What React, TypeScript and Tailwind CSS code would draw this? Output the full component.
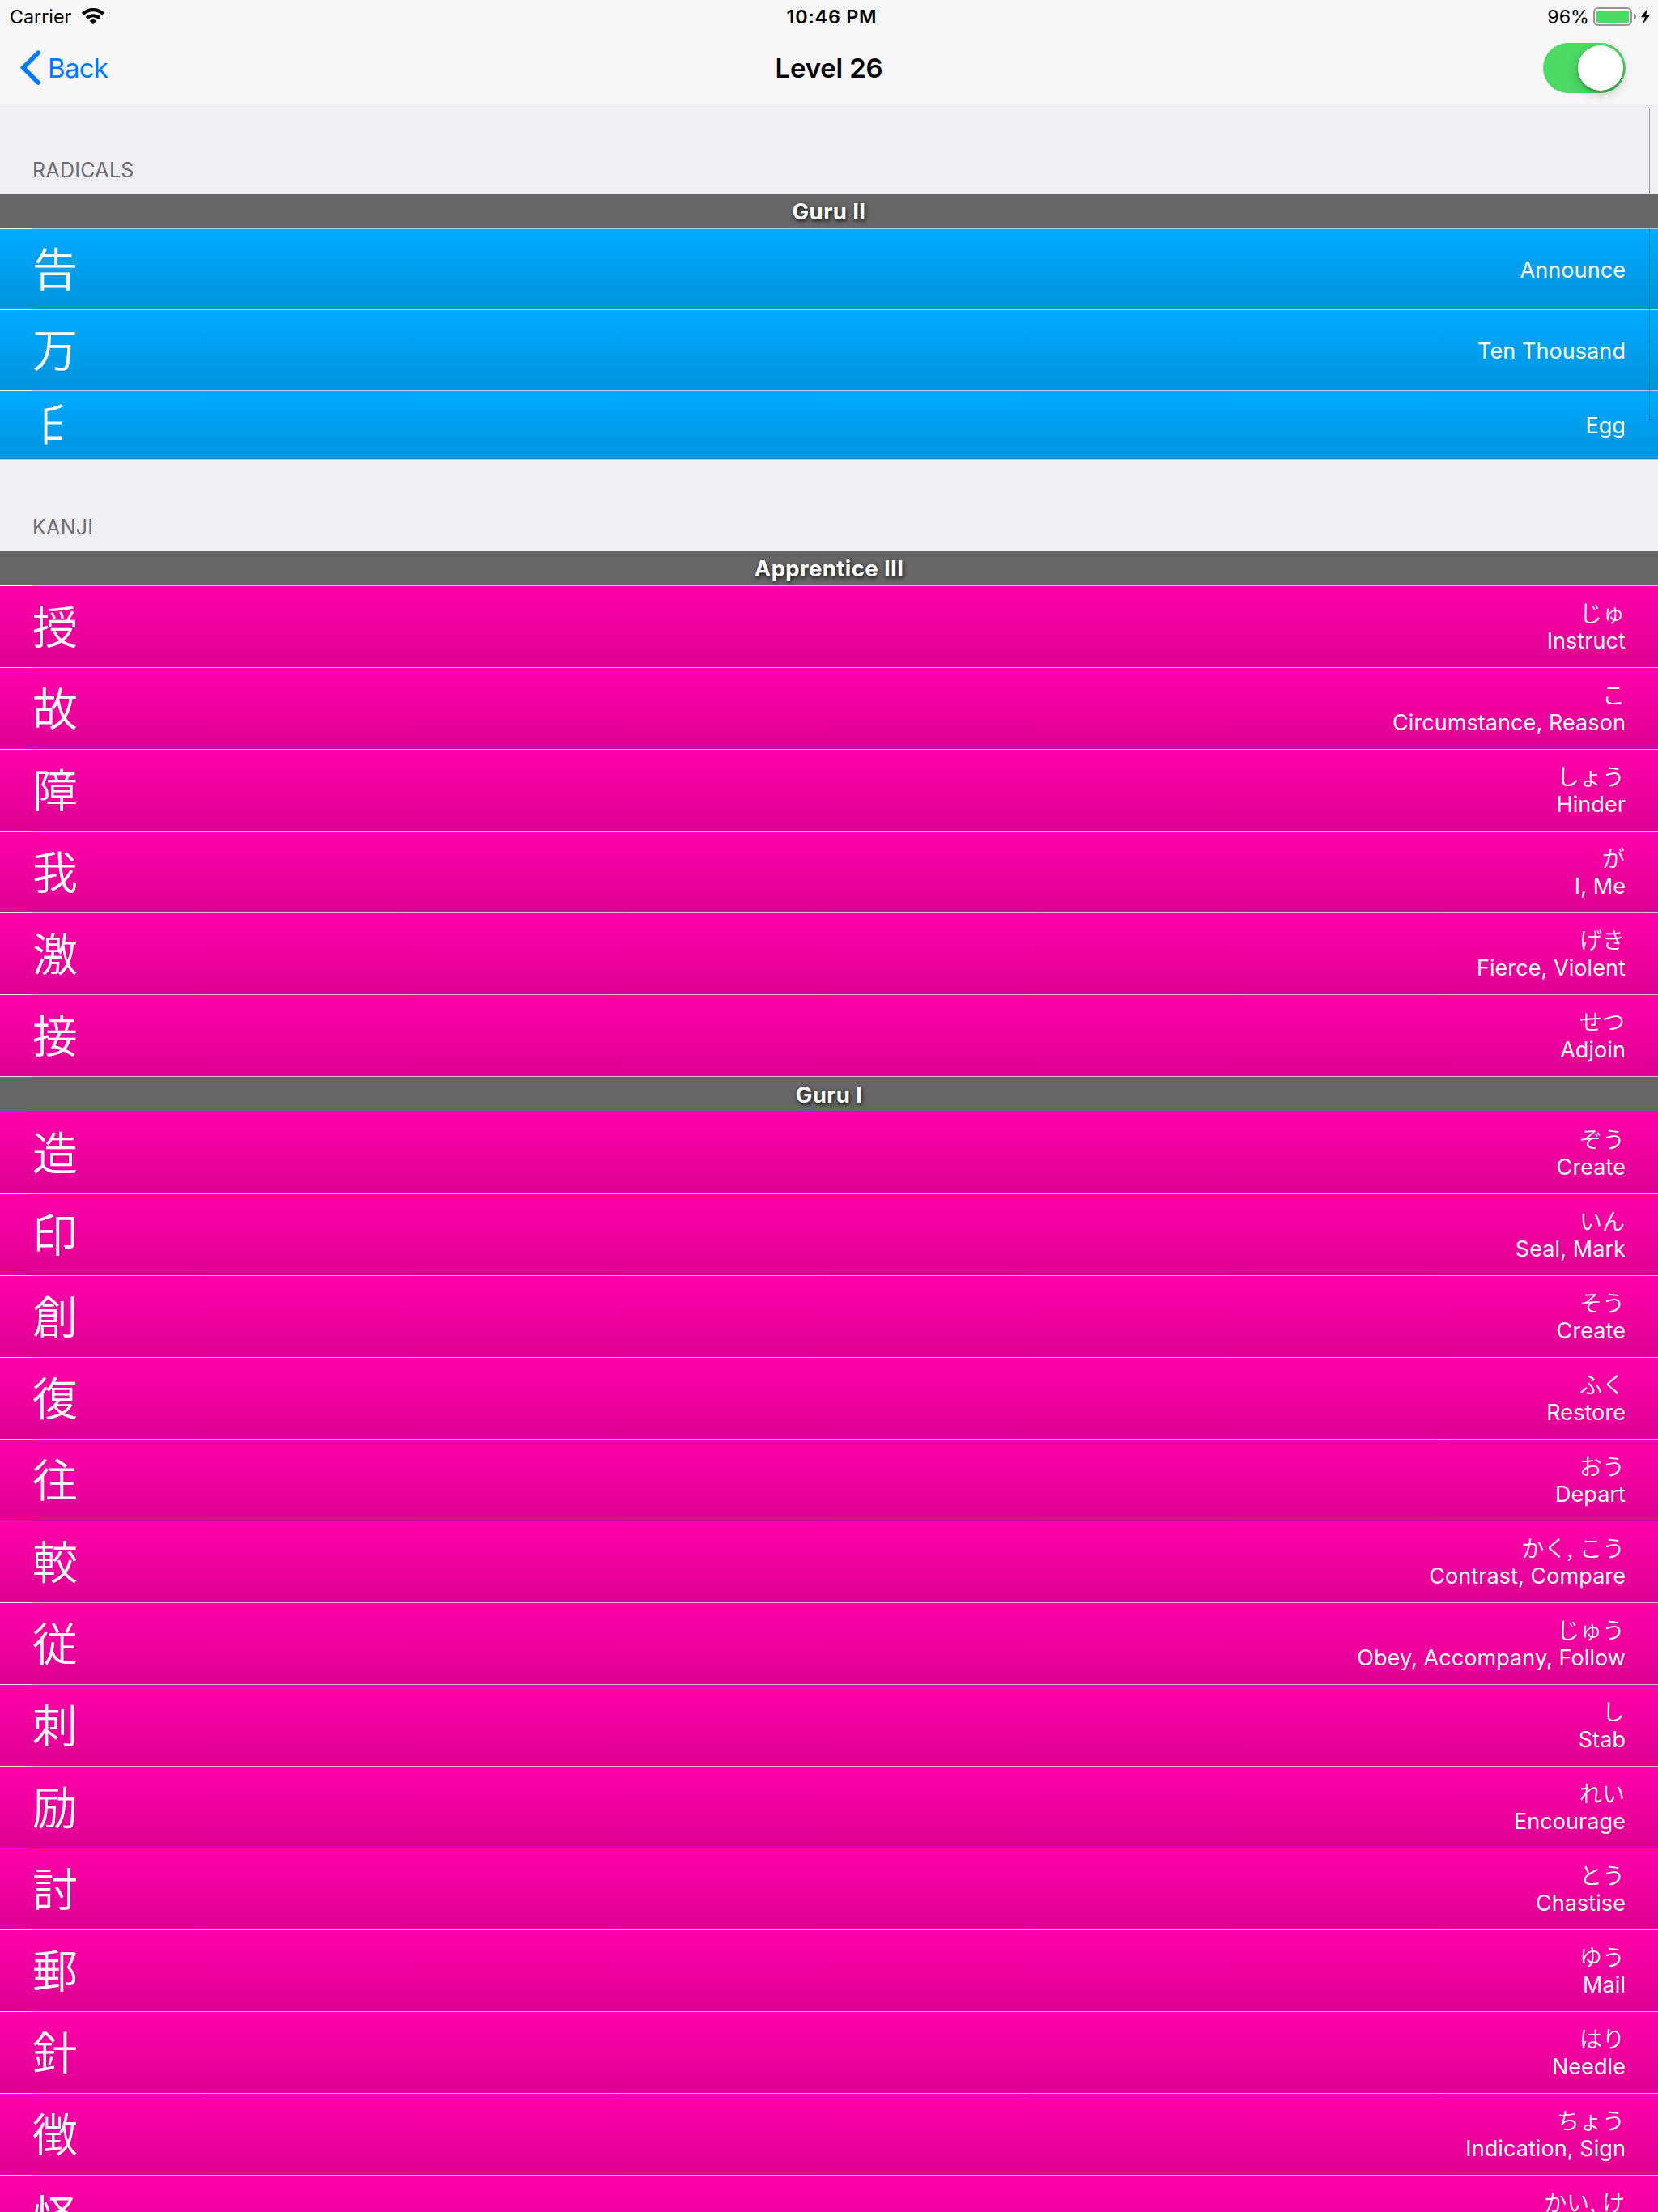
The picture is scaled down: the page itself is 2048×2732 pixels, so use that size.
import React from "react";

type Item = { glyph: React.ReactNode; reading?: string; meaning: string };

const EggRadical = () => (
  <svg width="56" height="56" viewBox="0 0 56 56" fill="none" stroke="#fff" strokeWidth="3.8">
    <path d="M37 7.6C31 10.6 24 12.4 16.6 13.3V55.5M16.6 29.5H36M16.6 48.5H37" />
  </svg>
);

const radicals: Item[] = [
  { glyph: "告", meaning: "Announce" },
  { glyph: "万", meaning: "Ten Thousand" },
];

const apprentice: Item[] = [
  { glyph: "授", reading: "じゅ", meaning: "Instruct" },
  { glyph: "故", reading: "こ", meaning: "Circumstance, Reason" },
  { glyph: "障", reading: "しょう", meaning: "Hinder" },
  { glyph: "我", reading: "が", meaning: "I, Me" },
  { glyph: "激", reading: "げき", meaning: "Fierce, Violent" },
  { glyph: "接", reading: "せつ", meaning: "Adjoin" },
];

const guru: Item[] = [
  { glyph: "造", reading: "ぞう", meaning: "Create" },
  { glyph: "印", reading: "いん", meaning: "Seal, Mark" },
  { glyph: "創", reading: "そう", meaning: "Create" },
  { glyph: "復", reading: "ふく", meaning: "Restore" },
  { glyph: "往", reading: "おう", meaning: "Depart" },
  { glyph: "較", reading: "かく, こう", meaning: "Contrast, Compare" },
  { glyph: "従", reading: "じゅう", meaning: "Obey, Accompany, Follow" },
  { glyph: "刺", reading: "し", meaning: "Stab" },
  { glyph: "励", reading: "れい", meaning: "Encourage" },
  { glyph: "討", reading: "とう", meaning: "Chastise" },
  { glyph: "郵", reading: "ゆう", meaning: "Mail" },
  { glyph: "針", reading: "はり", meaning: "Needle" },
  { glyph: "徴", reading: "ちょう", meaning: "Indication, Sign" },
  { glyph: "怪", reading: "かい, け", meaning: "Suspicious" },
];

function Line({ tone }: { tone: "blue" | "pink" | "gray" }) {
  const left = { blue: "bg-[#e4fbff]", pink: "bg-[#ffdcf6]", gray: "bg-white" }[tone];
  const right = { blue: "bg-[#a3d3ec]", pink: "bg-[#eaacd8]", gray: "bg-[#d3c3cf]" }[tone];
  return (
    <div className="flex h-px shrink-0">
      <div className={`w-10 ${left}`} />
      <div className={`flex-1 ${right}`} />
    </div>
  );
}

function Row({ item, className }: { item: Item; className: string }) {
  return (
    <div className={`flex shrink-0 items-center justify-between px-10 text-white ${className}`}>
      <div className={`font-['Noto_Sans_CJK_JP',sans-serif] text-[56px] leading-[64px] font-[350] ${item.reading ? "pb-[6px]" : "pb-[8px]"}`}>
        {item.glyph}
      </div>
      <div className="pt-[2px] text-right">
        {item.reading && (
          <div className="mr-px h-[34px] font-['Noto_Sans_CJK_JP',sans-serif] text-[28px] leading-[30px] font-[350] [word-spacing:2px]">{item.reading}</div>
        )}
        <div className="text-[27px] leading-[34px] tracking-[0.08px]">{item.meaning}</div>
      </div>
    </div>
  );
}

const blue = "bg-linear-to-b from-[#00aaff] to-[#0093dd]";
const pink = "bg-linear-to-b from-[#ff00aa] to-[#dd0093]";

function SectionTitle({ children, className }: { children: string; className: string }) {
  return (
    <div className={`flex shrink-0 items-end border-b border-[#c8c7cc] px-10 pb-[14px] text-[25px] leading-[30px] tracking-[0.3px] text-[#6d6d72] ${className}`}>
      {children}
    </div>
  );
}

function StageBar({ children, className = "h-[42px]" }: { children: string; className?: string }) {
  return (
    <div className={`flex shrink-0 items-center justify-center bg-[#666] text-[27.5px] leading-[34px] font-bold tracking-[0.4px] text-white [text-shadow:1px_2px_5px_rgba(0,0,0,0.85)] ${className}`}>
      {children}
    </div>
  );
}

export default function App() {
  return (
    <div className="relative flex h-[2732px] w-[2048px] flex-col overflow-hidden bg-[#efeff4] font-['Inter',sans-serif]">
      <header className="h-[129px] shrink-0 border-b border-[#a7a7ac] bg-[#f7f7f9]">
        <div className="grid h-10 grid-cols-3 items-center pt-px text-[23.3px] leading-[38px] text-black">
          <div className="flex items-center pl-3">
            <span>Carrier</span>
            <svg className="mb-[2px] ml-[12px]" width="30" height="22" viewBox="0 0 30 22" fill="none" stroke="#000" strokeWidth="4.2">
              <path d="M2.4 8.3A18 18 0 0 1 27.6 8.3" />
              <path d="M7.2 13.4A11.2 11.2 0 0 1 22.8 13.4" />
              <path d="M10.6 16.8A6.3 6.3 0 0 1 19.4 16.8L15 21.2Z" fill="#000" stroke="none" />
            </svg>
          </div>
          <div className="pl-[7px] text-center font-semibold tracking-[0.8px]">10:46 PM</div>
          <div className="flex items-center justify-end pr-[7px]">
            <span className="mr-[4px] pl-px">96%</span>
            <svg className="mb-[2px]" width="74" height="24" viewBox="0 0 74 24">
              <rect x="2" y="2" width="46" height="21" rx="5" fill="none" stroke="#97979b" strokeWidth="2" />
              <rect x="5" y="5" width="40" height="15" rx="2" fill="#4cd964" />
              <path d="M51 8.5c4 1.2 4 6.8 0 8z" fill="#8e8e93" />
              <path d="M68.4 2L60 13.2h4.8L62.6 21.6L71.2 10.4h-5z" fill="#000" />
            </svg>
          </div>
        </div>
        <div className="grid h-[88px] grid-cols-3 items-center text-[33px] leading-10">
          <div className="flex items-center pl-[25px] text-[#007aff]">
            <svg width="26" height="44" viewBox="0 0 26 44" fill="none" stroke="#007aff" strokeWidth="5.6" strokeLinecap="round">
              <path d="M22.1 3.2L3.8 21.6L22.1 40" strokeLinejoin="miter" />
            </svg>
            <span className="ml-[8px] tracking-[-0.7px]">Back</span>
          </div>
          <div className="text-center font-semibold tracking-[-0.19px]">Level 26</div>
          <div className="flex justify-end pr-10">
            <div className="flex h-[62px] w-[102px] items-center justify-end rounded-full bg-[#4cd964] pr-[3px]">
              <div className="size-14 rounded-full bg-white shadow-[0_5px_14px_rgba(0,0,0,0.2),0_2px_3px_rgba(0,0,0,0.25)]" />
            </div>
          </div>
        </div>
      </header>

      <SectionTitle className="h-[111px]">RADICALS</SectionTitle>
      <StageBar>Guru II</StageBar>
      <Line tone="blue" />
      {radicals.map((r) => (
        <React.Fragment key={r.meaning}>
          <Row item={r} className={`h-[99px] ${blue}`} />
          <Line tone="blue" />
        </React.Fragment>
      ))}
      <Row item={{ glyph: <EggRadical />, meaning: "Egg" }} className={`h-[84px] ${blue}`} />
      <div className="h-px shrink-0 bg-[#a3d3ec]" />

      <SectionTitle className="h-[113px]">KANJI</SectionTitle>
      <StageBar>Apprentice III</StageBar>
      <Line tone="gray" />
      {apprentice.map((k) => (
        <React.Fragment key={k.glyph as string}>
          <Row item={k} className={`h-[100px] ${pink}`} />
          <Line tone="pink" />
        </React.Fragment>
      ))}
      <StageBar className="h-[43px]">Guru I</StageBar>
      <Line tone="gray" />
      {guru.map((k) => (
        <React.Fragment key={k.glyph as string}>
          <Row item={k} className={`h-[100px] ${pink}`} />
          <Line tone="pink" />
        </React.Fragment>
      ))}

      <div className="absolute top-[135px] right-[10px] h-[104px] w-px bg-black/35" />
      <div className="absolute top-[283px] right-[10px] h-[236px] w-px bg-black/35" />
      <div className="absolute top-[518px] right-[7px] h-px w-[3px] bg-black/35" />
    </div>
  );
}
